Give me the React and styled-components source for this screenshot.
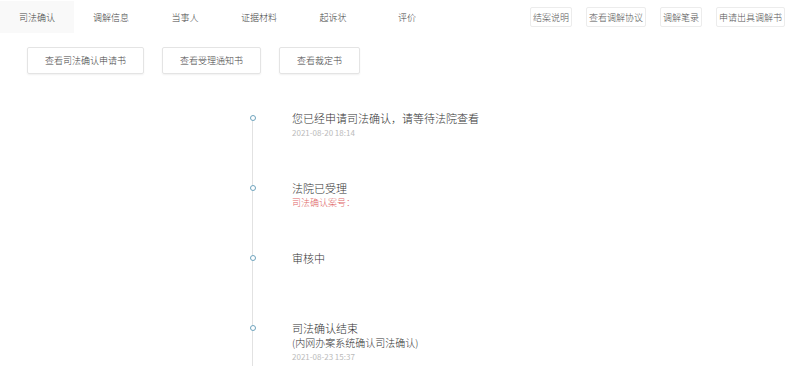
import React from 'react';
import styled, { createGlobalStyle } from 'styled-components';

const GlobalStyle = createGlobalStyle`
  body {
    margin: 0;
    background: #fff;
    font-family: "Noto Sans CJK SC", "Noto Sans", sans-serif;
    color: #333;
  }
`;

const Page = styled.div`
  width: 800px;
  height: 366px;
  overflow: hidden;
`;

const Header = styled.div`
  display: flex;
  align-items: center;
  justify-content: space-between;
  height: 34px;
  padding-right: 15px;
`;

const Tabs = styled.div`
  display: flex;
`;

const Tab = styled.div`
  width: 74px;
  height: 32px;
  display: flex;
  align-items: center;
  justify-content: center;
  font-size: 9px;
  font-weight: 300;
  color: #444;
  background: ${(p) => (p.$active ? '#f9f9f9' : 'transparent')};
`;

const Links = styled.div`
  display: flex;
  gap: 14px;
`;

const LinkButton = styled.div`
  height: 18px;
  padding: 0 2px;
  display: flex;
  align-items: center;
  font-size: 9px;
  font-weight: 300;
  color: #555;
  border: 1px solid #ececec;
  border-radius: 2px;
`;

const Actions = styled.div`
  display: flex;
  gap: 18px;
  margin: 13px 0 0 27px;
`;

const ActionButton = styled.div`
  height: 25px;
  padding: 0 17px;
  display: flex;
  align-items: center;
  font-size: 9px;
  font-weight: 300;
  color: #444;
  border: 1px solid #e4e4e4;
  border-radius: 2px;
  box-shadow: 0 1px 2px rgba(0, 0, 0, 0.06);
`;

const Timeline = styled.div`
  margin: 37px 0 0 248px;
`;

const Item = styled.div`
  display: flex;
  height: 70px;
`;

const Rail = styled.div`
  width: 9px;
  display: flex;
  flex-direction: column;
  align-items: center;
`;

const RailLine = styled.div`
  width: 1px;
  background: ${(p) => (p.$hidden ? 'transparent' : '#e2e2e2')};
  height: ${(p) => (p.$fixed ? '4px' : 'auto')};
  flex: ${(p) => (p.$fixed ? 'none' : '1')};
`;

const Dot = styled.div`
  width: 4px;
  height: 4px;
  border: 1.5px solid #6ea3bd;
  border-radius: 50%;
  background: #fff;
`;

const Content = styled.div`
  margin-left: 35px;
`;

const Title = styled.div`
  font-size: 11px;
  font-weight: 300;
  line-height: 14px;
  color: #333;
`;

const Note = styled.div`
  margin-top: 2px;
  font-size: ${(p) => (p.$size || 9)}px;
  font-weight: 300;
  line-height: 12px;
  color: ${(p) => p.$color || '#333'};
`;

const DateText = styled.div`
  margin-top: 2px;
  font-size: 8px;
  line-height: 11px;
  color: #bbb;
`;

const tabs = ['司法确认', '调解信息', '当事人', '证据材料', '起诉状', '评价'];
const links = ['结案说明', '查看调解协议', '调解笔录', '申请出具调解书'];
const actions = ['查看司法确认申请书', '查看受理通知书', '查看裁定书'];

const steps = [
  { title: '您已经申请司法确认，请等待法院查看', date: '2021-08-20 18:14' },
  { title: '法院已受理', note: '司法确认案号：', noteColor: '#e06666' },
  { title: '审核中' },
  { title: '司法确认结束', note: '(内网办案系统确认司法确认)', noteSize: 10, date: '2021-08-23 15:37' },
];

export default function App() {
  return (
    <Page>
      <GlobalStyle />
      <Header>
        <Tabs>
          {tabs.map((t, i) => (
            <Tab key={t} $active={i === 0}>{t}</Tab>
          ))}
        </Tabs>
        <Links>
          {links.map((l) => (
            <LinkButton key={l}>{l}</LinkButton>
          ))}
        </Links>
      </Header>
      <Actions>
        {actions.map((a) => (
          <ActionButton key={a}>{a}</ActionButton>
        ))}
      </Actions>
      <Timeline>
        {steps.map((s, i) => (
          <Item key={s.title}>
            <Rail>
              <RailLine $fixed $hidden={i === 0} />
              <Dot />
              <RailLine />
            </Rail>
            <Content>
              <Title>{s.title}</Title>
              {s.note && (
                <Note $color={s.noteColor} $size={s.noteSize}>{s.note}</Note>
              )}
              {s.date && <DateText>{s.date}</DateText>}
            </Content>
          </Item>
        ))}
      </Timeline>
    </Page>
  );
}
